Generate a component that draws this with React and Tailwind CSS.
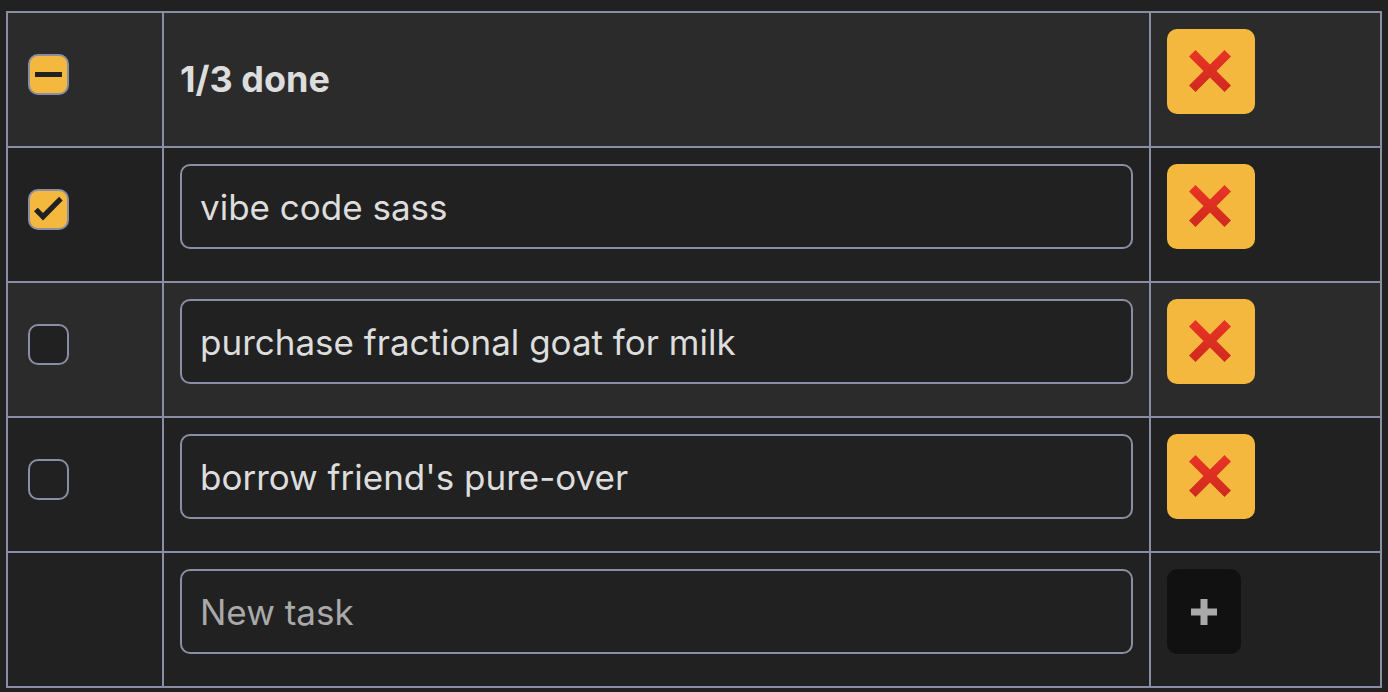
import { useEffect, useRef, useState } from "react";

function Checkbox({ checked, indeterminate = false, label, onChange }) {
  const ref = useRef(null);

  useEffect(() => {
    ref.current.indeterminate = indeterminate;
  }, [indeterminate]);

  return (
    <span className="ml-1 mt-[25px] grid w-[41px]">
      <input
        ref={ref}
        type="checkbox"
        aria-label={label}
        checked={checked}
        onChange={onChange}
        className="col-start-1 row-start-1 size-[41px] appearance-none rounded-[10px] border-2 border-[#898ea4] bg-[#212121] checked:bg-[#f5b83f] indeterminate:bg-[#f5b83f]"
      />
      <svg
        viewBox="0 0 41 41"
        aria-hidden="true"
        className="pointer-events-none col-start-1 row-start-1 size-[41px]"
        fill="#212121"
      >
        {indeterminate && <rect x="7" y="18" width="27" height="5" />}
        {checked && !indeterminate && (
          <path d="M6 22.3 9.8 18.7l5.2 5.2L31.1 7.8l3.6 3.6L15 31.5z" />
        )}
      </svg>
    </span>
  );
}

function DeleteButton({ label, onClick }) {
  return (
    <button
      type="button"
      aria-label={label}
      onClick={onClick}
      className="mb-8 flex h-[85px] w-[88px] items-center justify-center rounded-[10px] bg-[#f5b83f] pr-0.5 pb-0.5"
    >
      <svg viewBox="0 0 42 42" aria-hidden="true" className="size-[42px]">
        <defs>
          <linearGradient id="cross" x1="0" y1="0" x2="0" y2="1">
            <stop offset="0" stopColor="#e93425" />
            <stop offset="1" stopColor="#cf2a1e" />
          </linearGradient>
        </defs>
        <path
          d="M6.5 0 21 14.5 35.5 0 42 6.5 27.5 21 42 35.5 35.5 42 21 27.5 6.5 42 0 35.5 14.5 21 0 6.5z"
          fill="url(#cross)"
        />
      </svg>
    </button>
  );
}

const cell = "border-2 border-[#898ea4] px-4 pt-4 text-left align-top";
const field =
  "mb-8 block h-[85px] w-full rounded-[10px] border-2 border-[#898ea4] bg-[#212121] px-[18px] text-[35px] text-[#dddddd] outline-none placeholder:text-[#a9a9a9]";

export default function App() {
  const [tasks, setTasks] = useState([
    { id: 1, text: "vibe code sass", done: true },
    { id: 2, text: "purchase fractional goat for milk", done: false },
    { id: 3, text: "borrow friend's pure-over", done: false },
  ]);
  const [draft, setDraft] = useState("");

  const doneCount = tasks.filter((t) => t.done).length;
  const allDone = tasks.length > 0 && doneCount === tasks.length;

  const update = (id, change) =>
    setTasks(tasks.map((t) => (t.id === id ? { ...t, ...change } : t)));

  const add = () => {
    if (!draft.trim()) return;
    setTasks([...tasks, { id: Date.now(), text: draft, done: false }]);
    setDraft("");
  };

  return (
    <main className="min-h-screen bg-[#212121] px-1.5 pt-[11px] font-['Inter',sans-serif] text-[36px] leading-[44px] text-[#dddddd]">
      <table className="w-full table-fixed border-collapse">
        <colgroup>
          <col className="w-[156px]" />
          <col />
          <col className="w-[231px]" />
        </colgroup>
        <thead>
          <tr className="bg-[#2b2b2b]">
            <th className={cell}>
              <Checkbox
                label="Mark all tasks"
                checked={allDone}
                indeterminate={doneCount > 0 && !allDone}
                onChange={() =>
                  setTasks(tasks.map((t) => ({ ...t, done: !allDone })))
                }
              />
            </th>
            <th className="border-2 border-[#898ea4] px-4 pb-0.5 text-left align-middle font-bold">
              {doneCount}/{tasks.length} done
            </th>
            <th className={cell}>
              <DeleteButton
                label="Delete done tasks"
                onClick={() => setTasks(tasks.filter((t) => !t.done))}
              />
            </th>
          </tr>
        </thead>
        <tbody>
          {tasks.map((task) => (
            <tr key={task.id} className="even:bg-[#2b2b2b]">
              <td className={cell}>
                <Checkbox
                  label={`Done: ${task.text}`}
                  checked={task.done}
                  onChange={() => update(task.id, { done: !task.done })}
                />
              </td>
              <td className={cell}>
                <input
                  type="text"
                  aria-label="Task"
                  value={task.text}
                  onChange={(e) => update(task.id, { text: e.target.value })}
                  className={field}
                />
              </td>
              <td className={cell}>
                <DeleteButton
                  label={`Delete ${task.text}`}
                  onClick={() => setTasks(tasks.filter((t) => t.id !== task.id))}
                />
              </td>
            </tr>
          ))}
        </tbody>
        <tfoot>
          <tr>
            <td className={cell} />
            <td className={cell}>
              <input
                type="text"
                aria-label="New task"
                placeholder="New task"
                value={draft}
                onChange={(e) => setDraft(e.target.value)}
                className={field}
              />
            </td>
            <td className={cell}>
              <button
                type="button"
                aria-label="Add task"
                disabled={!draft.trim()}
                onClick={add}
                className="mb-8 flex h-[85px] w-[74px] items-center justify-center rounded-[10px] bg-[#111111] text-[#aaaaaa]"
              >
                <svg viewBox="0 0 26 26" aria-hidden="true" className="size-[26px]">
                  <path d="M9.5 0h7v9.5H26v7h-9.5V26h-7v-9.5H0v-7h9.5z" fill="currentColor" />
                </svg>
              </button>
            </td>
          </tr>
        </tfoot>
      </table>
    </main>
  );
}
